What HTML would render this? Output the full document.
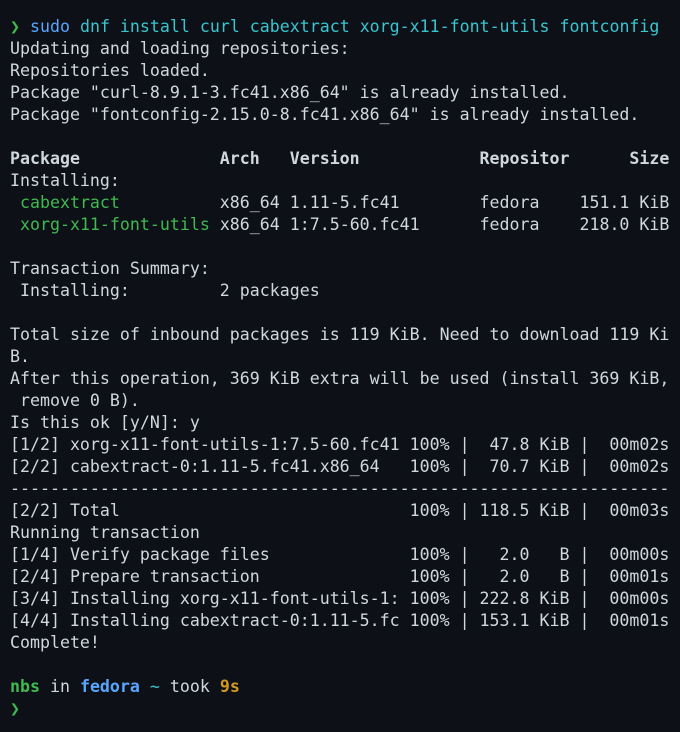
<!DOCTYPE html><html><head><meta charset="utf-8"><style>
html,body{margin:0;background:#0d1117;width:680px;height:732px;overflow:hidden}
pre{margin:0;position:absolute;left:10px;top:16px;font-family:"DejaVu Sans Mono","Liberation Mono",monospace;font-size:16.6px;line-height:22px;color:#d0d7de}
.g{color:#3fb950}.b{color:#58a6ff}.c{color:#39c5cf}.y{color:#d29922}.w{font-weight:bold}
</style></head><body><pre><span class="g">❯</span> <span class="b">sudo</span> <span class="c">dnf install curl cabextract xorg-x11-font-utils fontconfig</span>
Updating and loading repositories:
Repositories loaded.
Package "curl-8.9.1-3.fc41.x86_64" is already installed.
Package "fontconfig-2.15.0-8.fc41.x86_64" is already installed.

<span class="w">Package              Arch   Version            Repositor      Size</span>
Installing:
 <span class="g">cabextract</span>          x86_64 1.11-5.fc41        fedora    151.1 KiB
 <span class="g">xorg-x11-font-utils</span> x86_64 1:7.5-60.fc41      fedora    218.0 KiB

Transaction Summary:
 Installing:         2 packages

Total size of inbound packages is 119 KiB. Need to download 119 Ki
B.
After this operation, 369 KiB extra will be used (install 369 KiB,
 remove 0 B).
Is this ok [y/N]: y
[1/2] xorg-x11-font-utils-1:7.5-60.fc41 100% |  47.8 KiB |  00m02s
[2/2] cabextract-0:1.11-5.fc41.x86_64   100% |  70.7 KiB |  00m02s
------------------------------------------------------------------
[2/2] Total                             100% | 118.5 KiB |  00m03s
Running transaction
[1/4] Verify package files              100% |   2.0   B |  00m00s
[2/4] Prepare transaction               100% |   2.0   B |  00m01s
[3/4] Installing xorg-x11-font-utils-1: 100% | 222.8 KiB |  00m00s
[4/4] Installing cabextract-0:1.11-5.fc 100% | 153.1 KiB |  00m01s
Complete!

<span class="g w">nbs</span> in <span class="b w">fedora</span> <span class="c">~</span> took <span class="y w">9s</span>
<span class="g">❯</span></pre></body></html>
